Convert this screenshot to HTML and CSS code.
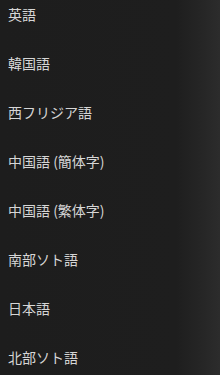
FILE: index.html
```html
<!DOCTYPE html>
<html>
<head>
  <title>Languages</title>
  <link rel="stylesheet" href="styles.css">
</head>
<body>
<ul class="lang-list">
  <li>英語</li>
  <li>韓国語</li>
  <li>西フリジア語</li>
  <li>中国語 (簡体字)</li>
  <li>中国語 (繁体字)</li>
  <li>南部ソト語</li>
  <li>日本語</li>
  <li>北部ソト語</li>
</ul>
</body>
</html>
```

FILE: styles.css
```css
html, body {
  margin: 0;
  height: 100%;
}

body {
  background: linear-gradient(to right, #1d1d1d 0%, #1e1e1e 80%, #262626 92%, #2c2c2c 100%);
  font-family: "Noto Sans CJK JP", "Noto Sans", sans-serif;
  overflow: hidden;
}

.lang-list {
  list-style-type: none;
  margin: 0;
  padding: 0;
}

.lang-list li {
  height: 49px;
  box-sizing: border-box;
  padding: 5px 0 0 8px;
  font-size: 14px;
  line-height: 18px;
  color: #d6d6d6;
}
```
